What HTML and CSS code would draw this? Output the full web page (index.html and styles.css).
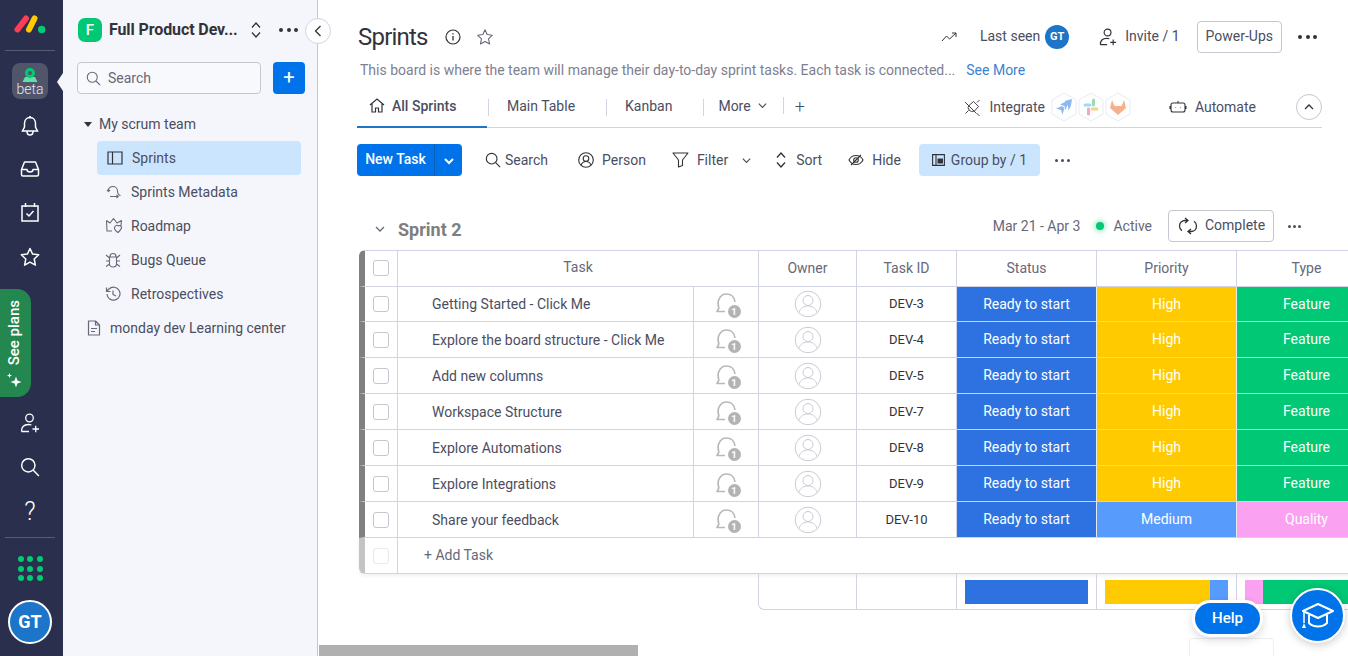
FILE: index.html
```html
<!DOCTYPE html>
<html lang="en">
<head>
<meta charset="utf-8">
<title>Sprints</title>
<link rel="stylesheet" href="styles.css">
</head>
<body>
<svg class="defs" width="0" height="0" aria-hidden="true">
  <symbol id="bubble" viewBox="0 0 26 26">
    <path d="M6 17C3.500 11 6.500 3 13.500 3c4.500 0 8 3 8.500 8M6 17l-2 3.500h8" fill="none" stroke="#b8b8b8" stroke-width="1.700" stroke-linejoin="round"/>
  </symbol>
  <symbol id="avatar" viewBox="0 0 28 28">
    <circle cx="14" cy="14" r="12.800" fill="#fff" stroke="#c9ccd6" stroke-width="1"/>
    <circle cx="14" cy="10.500" r="5" fill="none" stroke="#c9ccd6" stroke-width="1"/>
    <path d="M4.800 22.500c1.700-4.800 5.200-6.500 9.200-6.500s7.500 1.700 9.200 6.500" fill="none" stroke="#c9ccd6" stroke-width="1"/>
  </symbol>
  <symbol id="chev" viewBox="0 0 12 12">
    <path d="M2 4l4 4 4-4" fill="none" stroke="currentColor" stroke-width="1.300"/>
  </symbol>
  <symbol id="updown" viewBox="0 0 12 18">
    <path d="M2 6.500L6 2l4 4.500M2 11.500L6 16l4-4.500" fill="none" stroke="currentColor" stroke-width="1.300"/>
  </symbol>
  <symbol id="lens" viewBox="0 0 18 18">
    <circle cx="7.500" cy="7.500" r="6" fill="none" stroke="currentColor" stroke-width="1.300"/>
    <path d="M12 12l5 5" stroke="currentColor" stroke-width="1.300"/>
  </symbol>
  <symbol id="invite" viewBox="0 0 20 20">
    <circle cx="9.500" cy="5" r="3.800" fill="none" stroke="currentColor" stroke-width="1.300"/>
    <path d="M1.500 18.500c0-4.500 2.500-7 7-7 1 0 2 .2 3 .5M1.500 18.500h7.500M12.500 16h6.500M15.750 12.800v6.500" fill="none" stroke="currentColor" stroke-width="1.300"/>
  </symbol>
</svg>

<nav class="rail">
  <svg class="logo" width="32" height="20" viewBox="0 0 32 20"><path d="M3.500 15.500L12 4.500" stroke="#ff3d57" stroke-width="6" stroke-linecap="round"/><path d="M15 15.500l5.500-11" stroke="#ffcb00" stroke-width="6" stroke-linecap="round"/><circle cx="27.700" cy="15.500" r="3.700" fill="#00ca72"/></svg>
  <div class="rail-line"></div>
  <div class="beta">
    <svg width="18" height="14" viewBox="0 0 18 14"><path d="M1.500 14l2.500-5h10l2.500 5z" fill="#5fe0a5"/><circle cx="9" cy="5" r="3.500" fill="none" stroke="#00ca72" stroke-width="3"/></svg>
    <span>beta</span>
  </div>
  <svg class="rail-ico first" width="20" height="22" viewBox="0 0 20 22"><path d="M10 2.500c-3.800 0-5.500 3-5.500 6v3.500L2.500 16h15l-2-4V8.500c0-3-1.700-6-5.500-6zM10 1v1.500M7 16.500c0 2 1.300 3.500 3 3.500s3-1.500 3-3.500" fill="none" stroke="#fff" stroke-width="1.500"/></svg>
  <svg class="rail-ico" width="20" height="18" viewBox="0 0 20 18"><path d="M4.500 2h11l3 7.500v5c0 1-.8 1.500-1.500 1.500H3c-.8 0-1.500-.5-1.500-1.500v-5zM1.500 9.500H7c0 1.500 1 2.500 3 2.500s3-1 3-2.500h5.500" fill="none" stroke="#fff" stroke-width="1.500" stroke-linejoin="round"/></svg>
  <svg class="rail-ico" width="20" height="20" viewBox="0 0 20 20"><path d="M2 4h16v15H2zM5.500 1v4M14.500 1v4M6.500 11.500l2.500 2.500 4.500-5" fill="none" stroke="#fff" stroke-width="1.500"/></svg>
  <svg class="rail-ico star" width="20" height="20" viewBox="0 0 20 20"><path d="M10 1.500l2.600 5.600 6.100.7-4.500 4.200 1.200 6.100-5.400-3-5.400 3 1.200-6.100L1.300 7.800l6.100-.7z" fill="none" stroke="#fff" stroke-width="1.500" stroke-linejoin="round"/></svg>
  <div class="plans">
    <span>See plans</span>
    <svg width="17" height="17" viewBox="0 0 17 17"><path d="M10 4.500l1.400 4.100 4.100 1.400-4.100 1.400L10 15.500l-1.400-4.100L4.500 10l4.100-1.400zM3.500 1l.7 1.800L6 3.500l-1.800.7L3.500 6l-.7-1.800L1 3.500l1.800-.7z" fill="#fff"/></svg>
  </div>
  <svg class="rail-ico inv" width="20" height="20"><use href="#invite"/></svg>
  <svg class="rail-ico" width="20" height="20"><use href="#lens"/></svg>
  <span class="rail-q">?</span>
  <div class="rail-line lower"></div>
  <div class="apps"><i></i><i></i><i></i><i></i><i></i><i></i><i></i><i></i><i></i></div>
  <div class="me">GT</div>
</nav>

<aside class="side">
  <div class="ws">
    <div class="ws-tile">F</div>
    <strong class="ws-name">Full Product Dev...</strong>
    <svg class="ws-arrows" width="12" height="18"><use href="#updown"/></svg>
    <div class="dots big"><i></i><i></i><i></i></div>
  </div>
  <button class="collapse" type="button" aria-label="Collapse"><svg width="8" height="12" viewBox="0 0 8 12"><path d="M6.500 1L1.500 6l5 5" fill="none" stroke="#323338" stroke-width="1.300"/></svg></button>
  <div class="side-search">
    <div class="side-input"><svg width="15" height="15"><use href="#lens"/></svg><span>Search</span></div>
    <div class="side-add">+</div>
  </div>
  <div class="tree-head"><i class="caret"></i>My scrum team</div>
  <ul class="tree">
    <li class="on"><svg width="16" height="14" viewBox="0 0 16 14"><path d="M1 1h14v12H1zM5.500 1v12" fill="none" stroke="#323338" stroke-width="1.200"/></svg>Sprints</li>
    <li><svg width="16" height="14" viewBox="0 0 16 14"><path d="M2 6c.5-3 2.500-4.500 5-4.500S11.500 3.500 11.500 6c0 2 1 4 3 4.500M1 5l1.500 1.500L4 5M4 11.500h8M10.500 10l1.700 1.500-1.700 1.500" fill="none" stroke="#676879" stroke-width="1.100"/></svg>Sprints Metadata</li>
    <li><svg width="18" height="18" viewBox="0 0 18 18"><path d="M1.500 3.500l3.500 2.500L8.500 1.500l3.500 4.500 4.500-2.500-.5 5M1.500 3.500L2 14h5M10 9.500c1-1.500 2.500-1.500 3.500-.5 1-1 3-.5 3 1.500 0 2-3 4.500-3.500 5-1-.5-4-3-3.500-4.500.1-.6.300-1.100.5-1.500z" fill="none" stroke="#676879" stroke-width="1.100" stroke-linejoin="round"/></svg>Roadmap</li>
    <li><svg width="16" height="16" viewBox="0 0 16 16"><path d="M5 4.500C5 2.500 6.500 1.500 8 1.500s3 1 3 3M4.500 5h7v7c0 1.800-1.500 3-3.500 3s-3.500-1.200-3.500-3zM1 3l3.500 3M15 3l-3.500 3M1 9h3.500M15 9h-3.500M1 14.500l3.500-2.500M15 14.500L11.500 12" fill="none" stroke="#676879" stroke-width="1.100"/></svg>Bugs Queue</li>
    <li><svg width="16" height="16" viewBox="0 0 16 16"><path d="M2 8a6.500 6.500 0 1 0 2-5L1.500 5.500M1.500 1.500v4h4M8 4.500V8.500l3 1.500" fill="none" stroke="#676879" stroke-width="1.200"/></svg>Retrospectives</li>
  </ul>
  <div class="doc"><svg width="14" height="16" viewBox="0 0 14 16"><path d="M1.500 1h7l4 4v10h-11zM8.500 1v4h4M4 8.500h6M4 11.500h4" fill="none" stroke="#676879" stroke-width="1.200" stroke-linejoin="round"/></svg>monday dev Learning center</div>
</aside>

<main class="main">
  <header class="top">
    <h1>Sprints</h1>
    <svg class="t-info" width="16" height="16" viewBox="0 0 16 16"><circle cx="8" cy="8" r="7" fill="none" stroke="#323338" stroke-width="1.200"/><path d="M8 7v4.500M8 4.200v1.300" stroke="#323338" stroke-width="1.300"/></svg>
    <svg class="t-star" width="18" height="18" viewBox="0 0 20 20"><path d="M10 2l2.400 5.300 5.800.7-4.300 4 1.200 5.800L10 15l-5.100 2.800L6.100 12 1.800 8l5.800-.7z" fill="none" stroke="#676879" stroke-width="1.200" stroke-linejoin="round"/></svg>
    <svg class="t-trend" width="16" height="10" viewBox="0 0 16 10"><path d="M1 9l4.500-5 3 3L15 1M11 1h4v4" fill="none" stroke="#323338" stroke-width="1"/></svg>
    <span class="t-seen">Last seen</span>
    <span class="mini">GT</span>
    <svg class="t-inv" width="18" height="18"><use href="#invite"/></svg>
    <span class="t-invite">Invite / 1</span>
    <span class="power">Power-Ups</span>
    <div class="dots big t-dots"><i></i><i></i><i></i></div>
  </header>
  <p class="desc"><span>This board is where the team will manage their day-to-day sprint tasks. Each task is connected...</span><a>See More</a></p>
  <div class="tabs">
    <div class="tab active"><svg width="16" height="15" viewBox="0 0 16 15"><path d="M1 7l7-6 7 6M3 5.500V14h3.500v-4h3v4H13V5.500" fill="none" stroke="#323338" stroke-width="1.200"/></svg>All Sprints</div>
    <div class="tab t-main">Main Table</div>
    <div class="tab t-kan">Kanban</div>
    <div class="tab t-more">More<svg width="11" height="11"><use href="#chev"/></svg></div>
    <span class="tab-plus">+</span>
    <div class="tabs-right">
      <svg class="i-plug" width="17" height="17" viewBox="0 0 17 17"><path d="M3 5l9 9M1.500 14.500L4.500 11.500M13 3.500L15.500 1M5 6.500L9.500 2.500l5 5-4 4.500-3 .5-2.500-1.500-1-2.500zM12.500 14l3 3M1 3l3 3" fill="none" stroke="#323338" stroke-width=".9"/></svg>
      <span>Integrate</span>
      <div class="hexes">
        <span class="hex"><svg width="26" height="30" viewBox="0 0 26 30"><path d="M13 1l12 7v14l-12 7-12-7V8z" fill="#fff" stroke="#e9ebf3"/><path d="M5 16.500l6-2.500 2.500 2-2 6.500-1.500-4.500zM9 12.500L15 9.500l2 2-2.500 6.500-1-4zM13.500 9L21 7l-1 6.500-2.500 5-1-7z" fill="#8db8f2"/></svg></span>
        <span class="hex"><svg width="26" height="30" viewBox="0 0 26 30"><path d="M13 1l12 7v14l-12 7-12-7V8z" fill="#fff" stroke="#e9ebf3"/><path d="M7 13h5" stroke="#9fdcf2" stroke-width="3" stroke-linecap="round"/><path d="M15.500 8v5" stroke="#9adbb4" stroke-width="3" stroke-linecap="round"/><path d="M19 17h-5" stroke="#f5d48e" stroke-width="3" stroke-linecap="round"/><path d="M10.500 22v-5" stroke="#f2a8be" stroke-width="3" stroke-linecap="round"/></svg></span>
        <span class="hex"><svg width="26" height="30" viewBox="0 0 26 30"><path d="M13 1l12 7v14l-12 7-12-7V8z" fill="#fff" stroke="#e9ebf3"/><path d="M13 23l-8-7 2-8 2.500 6h7L19 8l2 8z" fill="#f6b08e"/></svg></span>
      </div>
      <svg class="i-bot" width="18" height="14" viewBox="0 0 18 14"><path d="M4 3h10c1 0 2 1 2 2v5c0 1-1 2-2 2H4c-1 0-2-1-2-2V5c0-1 1-2 2-2zM1 6v3M17 6v3M9 1v2M6.500 7.500v.5M11.500 7.500v.5" fill="none" stroke="#323338" stroke-width="1.100"/></svg>
      <span>Automate</span>
      <div class="up"><svg width="10" height="8" viewBox="0 0 10 8"><path d="M1 6l4-4 4 4" fill="none" stroke="#323338" stroke-width="1.300"/></svg></div>
    </div>
  </div>
  <div class="tools">
    <div class="newtask"><span class="nt-label">New Task</span><span class="nt-drop"><svg width="12" height="12" viewBox="0 0 12 12"><path d="M2 4l4 4 4-4" fill="none" stroke="#fff" stroke-width="2"/></svg></span></div>
    <div class="tool t-s"><svg width="16" height="16"><use href="#lens"/></svg>Search</div>
    <div class="tool t-p"><svg width="16" height="16" viewBox="0 0 16 16"><circle cx="8" cy="8" r="7.300" fill="none" stroke="#323338" stroke-width="1.100"/><circle cx="8" cy="6.500" r="2.800" fill="none" stroke="#323338" stroke-width="1.100"/><path d="M3 13c1-2.500 3-3.500 5-3.500s4 1 5 3.500" fill="none" stroke="#323338" stroke-width="1.100"/></svg>Person</div>
    <div class="tool t-f"><svg width="17" height="16" viewBox="0 0 17 16"><path d="M1 1h15l-5.500 7v5.500L6.500 15V8z" fill="none" stroke="#323338" stroke-width="1.100" stroke-linejoin="round"/></svg>Filter<svg class="f-chev" width="11" height="11"><use href="#chev"/></svg></div>
    <div class="tool t-o"><svg width="12" height="18"><use href="#updown"/></svg>Sort</div>
    <div class="tool t-h"><svg width="16" height="12" viewBox="0 0 16 12"><path d="M1 6c1.500-3 4-4.500 7-4.500S13.500 3 15 6c-1.500 3-4 4.500-7 4.500S2.500 9 1 6zM3 11L13 1" fill="none" stroke="#323338" stroke-width="1.100"/><circle cx="8" cy="6" r="2.300" fill="none" stroke="#323338" stroke-width="1.100"/></svg>Hide</div>
    <div class="tool groupby"><svg width="13" height="12" viewBox="0 0 13 12"><path d="M.6.600h11.800v10.800H.6zM4 .6v10.800" fill="none" stroke="#323338" stroke-width="1.100"/><path d="M5.500 4.500h5.500v5H5.500z" fill="#323338"/></svg>Group by / 1</div>
    <div class="dots small tool-dots"><i></i><i></i><i></i></div>
  </div>

  <div class="group">
    <svg class="g-chev" width="12" height="12"><use href="#chev"/></svg>
    <h2>Sprint 2</h2>
    <span class="g-date">Mar 21 - Apr 3</span>
    <i class="g-dot"></i>
    <span class="g-active">Active</span>
    <div class="complete"><svg width="20" height="18" viewBox="0 0 20 18"><path d="M9 3.500H7C4 3.500 1.500 5.500 1.500 9c0 2 1 3.800 2.500 4.800M11 14.500h2c3 0 5.500-2 5.500-5.500 0-2-1-3.800-2.500-4.800M7 1l3 2.500L7 6M13 12l-3 2.500 3 2.500" fill="none" stroke="#323338" stroke-width="1.300"/></svg><span>Complete</span></div>
    <div class="dots small g-dots"><i></i><i></i><i></i></div>
  </div>

  <div class="table">
    <div class="row head">
      <div class="cell"><i class="check"></i></div>
      <div class="cell wide">Task</div>
      <div class="cell">Owner</div>
      <div class="cell">Task ID</div>
      <div class="cell">Status</div>
      <div class="cell">Priority</div>
      <div class="cell">Type</div>
    </div>
    <div class="row first">
      <div class="cell"><i class="check"></i></div><div class="cell name">Getting Started - Click Me</div><div class="cell"><span class="bub"><svg width="26" height="26"><use href="#bubble"/></svg><b>1</b></span></div><div class="cell"><svg width="28" height="28"><use href="#avatar"/></svg></div><div class="cell id">DEV-3</div><div class="cell c-blue">Ready to start</div><div class="cell c-yellow">High</div><div class="cell c-green">Feature</div>
    </div>
    <div class="row">
      <div class="cell"><i class="check"></i></div><div class="cell name">Explore the board structure - Click Me</div><div class="cell"><span class="bub"><svg width="26" height="26"><use href="#bubble"/></svg><b>1</b></span></div><div class="cell"><svg width="28" height="28"><use href="#avatar"/></svg></div><div class="cell id">DEV-4</div><div class="cell c-blue">Ready to start</div><div class="cell c-yellow">High</div><div class="cell c-green">Feature</div>
    </div>
    <div class="row">
      <div class="cell"><i class="check"></i></div><div class="cell name">Add new columns</div><div class="cell"><span class="bub"><svg width="26" height="26"><use href="#bubble"/></svg><b>1</b></span></div><div class="cell"><svg width="28" height="28"><use href="#avatar"/></svg></div><div class="cell id">DEV-5</div><div class="cell c-blue">Ready to start</div><div class="cell c-yellow">High</div><div class="cell c-green">Feature</div>
    </div>
    <div class="row">
      <div class="cell"><i class="check"></i></div><div class="cell name">Workspace Structure</div><div class="cell"><span class="bub"><svg width="26" height="26"><use href="#bubble"/></svg><b>1</b></span></div><div class="cell"><svg width="28" height="28"><use href="#avatar"/></svg></div><div class="cell id">DEV-7</div><div class="cell c-blue">Ready to start</div><div class="cell c-yellow">High</div><div class="cell c-green">Feature</div>
    </div>
    <div class="row">
      <div class="cell"><i class="check"></i></div><div class="cell name">Explore Automations</div><div class="cell"><span class="bub"><svg width="26" height="26"><use href="#bubble"/></svg><b>1</b></span></div><div class="cell"><svg width="28" height="28"><use href="#avatar"/></svg></div><div class="cell id">DEV-8</div><div class="cell c-blue">Ready to start</div><div class="cell c-yellow">High</div><div class="cell c-green">Feature</div>
    </div>
    <div class="row">
      <div class="cell"><i class="check"></i></div><div class="cell name">Explore Integrations</div><div class="cell"><span class="bub"><svg width="26" height="26"><use href="#bubble"/></svg><b>1</b></span></div><div class="cell"><svg width="28" height="28"><use href="#avatar"/></svg></div><div class="cell id">DEV-9</div><div class="cell c-blue">Ready to start</div><div class="cell c-yellow">High</div><div class="cell c-green">Feature</div>
    </div>
    <div class="row">
      <div class="cell"><i class="check"></i></div><div class="cell name">Share your feedback</div><div class="cell"><span class="bub"><svg width="26" height="26"><use href="#bubble"/></svg><b>1</b></span></div><div class="cell"><svg width="28" height="28"><use href="#avatar"/></svg></div><div class="cell id">DEV-10</div><div class="cell c-blue">Ready to start</div><div class="cell c-medium">Medium</div><div class="cell c-pink">Quality</div>
    </div>
    <div class="row add">
      <div class="cell"><i class="check faint"></i></div>
      <div class="add-label">+ Add Task</div>
    </div>
    <div class="summary">
      <div class="s-cell"></div>
      <div class="s-cell"></div>
      <div class="s-cell"><div class="bar"><i class="b-blue b-full"></i></div></div>
      <div class="s-cell"><div class="bar"><i class="b-yellow b-105"></i><i class="b-medium b-18"></i></div></div>
      <div class="s-cell"><div class="bar wide-bar"><i class="b-pink b-18"></i><i class="b-green b-105"></i></div></div>
    </div>
  </div>

  <div class="scroll-thumb"></div>
  <div class="ghost"></div>
  <div class="help">Help</div>
  <div class="academy"><svg width="36" height="32" viewBox="0 0 36 32"><path d="M18 4L33 11 18 18 3 11z" fill="none" stroke="#fff" stroke-width="2" stroke-linejoin="round"/><path d="M9 15v8c2.500 2.500 5.500 3.500 9 3.500s6.500-1 9-3.500v-8" fill="none" stroke="#fff" stroke-width="2"/><path d="M4 11v12" stroke="#fff" stroke-width="1.500"/><path d="M2 28l2-5 2 5z" fill="#fff"/></svg></div>
</main>
</body>
</html>
```
FILE: styles.css
```css
* { box-sizing: border-box; }
html, body { margin: 0; height: 100%; }
body {
  display: flex;
  height: 656px;
  overflow: hidden;
  background: #fff;
  color: #4b4e5f;
  font: 14px/20px Roboto, "Liberation Sans", sans-serif;
}
.defs { position: absolute; }
h1, h2, p, ul { margin: 0; padding: 0; }
ul { list-style: none; }

/* dots */
.dots { display: flex; }
.dots i { display: block; border-radius: 50%; background: #323338; }
.dots.big { gap: 3.500px; }
.dots.big i { width: 4px; height: 4px; }
.dots.small { gap: 3px; }
.dots.small i { width: 3px; height: 3px; background: #4b4e5f; }

/* rail */
.rail {
  width: 63px;
  flex: none;
  background: #292f4c;
  display: flex;
  flex-direction: column;
  align-items: center;
  padding-right: 3px;
  position: relative;
}
.logo { margin-top: 14px; }
.rail-line { width: 50px; height: 1px; background: #585c73; margin-top: 16px; }
.beta {
  width: 36px; height: 36px; margin-top: 12px;
  border-radius: 8px; background: #50556b;
  display: flex; flex-direction: column; align-items: center;
  padding-top: 5px;
  color: #e8e9ee; font-size: 14px; font-weight: 300; line-height: 12px; position: relative;
}
.beta svg { margin-bottom: 1px; }
.beta::after {
  content: ""; position: absolute; left: 45px; top: 10px;
  border: 9px solid transparent; border-right: 6px solid #f5f6fb; border-left: 0;
  height: 0;
}
.rail-ico { color: #fff; flex: none; margin-top: 24px; }
.rail-ico.first { margin-top: 16px; margin-bottom: -1px; }
.rail-ico.star { margin-top: 25px; }
.plans {
  align-self: flex-start;
  width: 31px; height: 108px; margin-top: 22px;
  background: #258750; border-radius: 0 14px 14px 0;
  display: flex; flex-direction: column; align-items: center; justify-content: flex-end;
  padding: 0 3px 8px 0; gap: 7px; color: #fff; font-weight: 500;
}
.plans span { writing-mode: vertical-rl; transform: rotate(180deg); font-size: 15px; line-height: 16px; white-space: nowrap; }
.rail-ico.inv { margin-top: 16px; }
.rail-q { color: #fff; font-size: 25px; line-height: 24px; margin-top: 23px; font-weight: 300; }
.rail-line.lower { margin-top: 13px; }
.apps { display: grid; grid-template-columns: repeat(3, 6px); gap: 3.500px; margin-top: 18px; }
.apps i { width: 6px; height: 6px; border-radius: 50%; background: #00ca72; }
.me {
  width: 44px; height: 44px; margin-top: 19px;
  border: 2px solid #fff; border-radius: 50%; background: #1c75c8;
  color: #fff; font-size: 18px; font-weight: 700;
  display: flex; align-items: center; justify-content: center;
}

/* sidebar */
.side {
  width: 255px; flex: none; background: #f5f6fb;
  border-right: 1px solid #c5c7d0;
  position: relative;
}
.ws { display: flex; align-items: center; margin: 18px 0 0 15px; height: 24px; }
.ws-tile {
  width: 24px; height: 24px; border-radius: 7px; background: #00c875;
  color: #fff; font-weight: 500; font-size: 15px; text-align: center; line-height: 24px;
}
.ws-name { margin-left: 7px; width: 141px; font-size: 16px; font-weight: 700; letter-spacing: -.1px; color: #323338; white-space: nowrap; }
.ws-arrows { color: #323338; margin-right: 17px; }
.collapse {
  position: absolute; left: 242px; top: 18px;
  width: 26px; height: 26px; border-radius: 50%; padding: 0;
  background: #fff; border: 1px solid #d0d4e4; z-index: 3;
  display: flex; align-items: center; justify-content: center;
}
.side-search { display: flex; margin: 20px 0 0 14px; gap: 12px; }
.side-input {
  width: 184px; height: 32px; border: 1px solid #c5c7d0; border-radius: 4px; background: #f8f9fc;
  display: flex; align-items: center; gap: 7px; padding-left: 8px; color: #676879;
}
.side-add {
  width: 32px; height: 32px; border-radius: 4px; background: #0073ea; color: #fff;
  text-align: center; font-size: 20px; line-height: 31px;
}
.tree-head { display: flex; align-items: center; margin: 20px 0 0 21px; height: 20px; color: #4b4e5f; }
.caret { border: 4px solid transparent; border-top: 5px solid #323338; border-bottom: 0; margin-right: 7px; }
.tree { margin: 7px 0 0 34px; width: 204px; }
.tree li { height: 34px; display: flex; align-items: center; gap: 8px; padding-left: 10px; border-radius: 4px; }
.tree li svg { flex: none; }
.tree li.on { background: #cce5ff; gap: 9px; }
.tree li:nth-child(2) { padding-left: 9px; gap: 9px; }
.tree li:nth-child(3) { padding-left: 8px; gap: 8px; }
.tree li:nth-child(4), .tree li:nth-child(5) { padding-left: 8px; gap: 10px; }
.doc { display: flex; align-items: center; gap: 9px; height: 34px; margin-left: 24px; white-space: nowrap; }

/* main */
.main { flex: 1; min-width: 0; position: relative; overflow: hidden; }
.top { display: flex; align-items: center; height: 38px; margin: 18px 0 0 40px; width: 959px; color: #4b4e5f; }
.top h1 { font-size: 24px; font-weight: 400; color: #323338; letter-spacing: -.8px; line-height: 38px; }
.t-info { margin-left: 17px; }
.t-star { margin-left: 15px; }
.t-trend { margin-left: auto; }
.t-seen { margin-left: 23px; margin-bottom: 2px; }
.t-invite { margin-bottom: 2px; }
.mini {
  width: 24px; height: 24px; margin-left: 5px; border-radius: 50%; background: #1c75c8; color: #fff;
  font-size: 11px; font-weight: 700; text-align: center; line-height: 24px;
}
.t-inv { margin: 0 8px 0 30px; color: #323338; }
.power { margin-left: 17px; border: 1px solid #c5c7d0; border-radius: 4px; padding: 4px 8px; height: 32px; white-space: nowrap; }
.t-dots { margin-left: 16px; }
.desc { display: flex; gap: 11px; margin: 4px 0 0 42px; height: 20px; color: #7e808f; white-space: nowrap; }
.desc a { color: #3a83d0; }
.tabs {
  display: flex; align-items: center; height: 38px; margin: 10px 0 0 39px; width: 965px;
  border-bottom: 1px solid #d0d4e4; position: relative;
}
.tab { display: flex; align-items: center; height: 37px; position: relative; padding-bottom: 6px; white-space: nowrap; }
.tab.active { width: 130px; padding-left: 12px; gap: 7px; border-bottom: 2px solid #1f76c2; padding-bottom: 5px; color: #4b4e5f; font-weight: 500; margin-bottom: -1px; }
.tab.t-main { margin-left: 20px; }
.t-main::before, .t-kan::before, .t-more::before, .tab-plus::before {
  content: ""; position: absolute; left: -19px; top: 9px; width: 1px; height: 17px; background: #d0d4e4;
}
.tab.t-kan { margin-left: 50px; }
.tab.t-more { margin-left: 46px; gap: 6px; }
.t-more::before { left: -15px; }
.tab-plus { position: relative; margin-left: 27px; font-size: 18px; font-weight: 300; margin-bottom: 4px; }
.tab-plus::before { left: -12px; top: 0; }
.tabs-right { margin-left: auto; display: flex; align-items: center; padding-bottom: 3px; }
.i-plug { margin-right: 8px; }
.hexes { display: flex; margin-left: 6px; }
.hex { display: block; width: 27px; height: 30px; }
.i-bot { margin: 0 8px 0 37px; }
.up {
  width: 26px; height: 26px; margin-left: 40px; border: 1px solid #c5c7d0; border-radius: 50%;
  display: flex; align-items: center; justify-content: center;
}
.tools { display: flex; align-items: center; height: 32px; margin: 16px 0 0 39px; }
.newtask { display: flex; width: 105px; height: 32px; background: #0073ea; border-radius: 4px; color: #fff; font-weight: 500; }
.nt-label { width: 78px; text-align: center; line-height: 30px; border-right: 1px solid #0a5fb8; }
.nt-drop { flex: 1; display: flex; align-items: center; justify-content: center; padding-top: 2px; }
.tool { display: flex; align-items: center; gap: 6px; height: 32px; white-space: nowrap; }
.t-s { margin-left: 23px; gap: 4px; }
.t-s svg, .t-p svg { color: #323338; }
.t-p { margin-left: 30px; gap: 8px; }
.t-f { margin-left: 26px; gap: 8px; }
.f-chev { margin-left: 5px; }
.t-o { margin-left: 23px; gap: 9px; color: #4b4e5f; }
.t-o svg { color: #323338; }
.t-h { margin-left: 26px; gap: 8px; }
.groupby { margin-left: 18px; width: 121px; background: #cce5ff; border-radius: 4px; padding-left: 13px; }
.tool-dots { margin-left: 15px; }

.group { display: flex; align-items: center; height: 32px; margin: 34px 0 0 56px; }
.g-chev { color: #676879; position: relative; top: 3px; }
.group h2 { margin-left: 12px; font-size: 18px; font-weight: 700; color: #7e7e7e; position: relative; top: 4px; }
.g-date { margin-left: auto; color: #676879; }
.g-dot { width: 8px; height: 8px; margin-left: 16px; border-radius: 50%; background: #00c875; box-shadow: 0 0 5px 2px #a9eccd; }
.g-active { margin-left: 9px; color: #676879; }
.complete {
  display: flex; align-items: center; gap: 7px; width: 106px; height: 32px; margin-left: 16px; padding-left: 9px;
  border: 1px solid #c5c7d0; border-radius: 4px;
}
.complete span { margin-bottom: 2px; }
.dots.small.g-dots { gap: 2px; margin: 0 47px 0 14px; }

.table { margin: 8px 0 0 41px; width: 1018px; position: relative; }
.row {
  display: grid;
  grid-template-columns: 33px 296px 65px 98px 100px 140px 140px 140px;
  height: 36px;
  border-left: 6px solid #808080;
  border-bottom: 1px solid #d0d4e4;
}
.row.head {
  height: 37px;
  grid-template-columns: 33px 361px 98px 100px 140px 140px 140px;
  border-top: 1px solid #d0d4e4;
  border-top-left-radius: 6px;
  color: #676879;
}
.row.first { height: 35px; }
.cell {
  display: flex; align-items: center; justify-content: center;
  border-right: 1px solid #d0d4e4;
  min-width: 0;
}
.head .cell { padding-bottom: 2px; }
.head .cell.wide { padding-bottom: 4px; }
.cell.name { justify-content: flex-start; padding-left: 34px; white-space: nowrap; }
.cell.id { font-size: 13px; color: #323338; }
.bub { display: block; position: relative; width: 26px; height: 26px; }
.bub svg { display: block; }
.bub b {
  position: absolute; left: 14.500px; top: 13.500px; width: 13px; height: 13px;
  border-radius: 50%; background: #b3b3b3; color: #fff;
  font-size: 9.500px; font-weight: 700; line-height: 13px; text-align: center;
}
.check { width: 16px; height: 16px; border: 1px solid #c5c7d0; border-radius: 3px; display: block; background: #fff; }
.check.faint { border-color: #e6e9ef; }
.c-blue, .c-yellow, .c-green, .c-medium, .c-pink { color: #fff; border-right-color: #e6e9ef; padding-bottom: 1px; }
.c-blue { background: #2d72e0; }
.c-yellow { background: #ffcb00; }
.c-green { background: #00c875; }
.c-medium { background: #579bfc; }
.c-pink { background: #faa1f1; }
.row.add {
  grid-template-columns: 33px 1fr;
  border-left-color: #c4c4c4;
  border-bottom-left-radius: 6px;
  box-shadow: 0 2px 4px rgba(0, 0, 0, .06);
  color: #676879;
}
.add-label { padding-left: 26px; line-height: 34px; }
.summary {
  display: grid;
  grid-template-columns: 98px 100px 140px 140px 140px;
  height: 36px; margin-left: 399px;
  border-left: 1px solid #d0d4e4; border-bottom: 1px solid #d0d4e4; border-bottom-left-radius: 6px;
}
.s-cell { border-right: 1px solid #d0d4e4; padding: 6px 8px 5px 8px; }
.bar { display: flex; height: 24px; }
.bar i { display: block; height: 24px; }
.b-full { width: 100%; }
.b-105 { width: 105px; flex: none; }
.b-18 { width: 18px; flex: none; }
.b-blue { background: #2d72e0; }
.b-yellow { background: #ffcb00; }
.b-medium { background: #579bfc; }
.b-pink { background: #faa1f1; }
.b-green { background: #00c875; }

/* floating */
.scroll-thumb { position: absolute; left: 1px; top: 645px; width: 319px; height: 11px; background: #b0b0b0; }
.ghost { position: absolute; left: 871px; top: 638px; width: 85px; height: 30px; border: 1px solid #eceef3; border-radius: 4px; }
.help {
  position: absolute; left: 874px; top: 600px; width: 71px; height: 37px;
  border: 3px solid #fff; border-radius: 19px; background: #0073ea;
  color: #fff; font-weight: 500; font-size: 15px; text-align: center; line-height: 31px;
  box-shadow: 0 3px 8px rgba(0, 0, 0, .15);
}
.academy {
  position: absolute; left: 972px; top: 588px; width: 55px; height: 55px;
  border: 2px solid #fff; border-radius: 50%; background: #0073ea;
  display: flex; align-items: center; justify-content: center;
  box-shadow: 0 2px 8px rgba(0, 0, 0, .2);
}
```
